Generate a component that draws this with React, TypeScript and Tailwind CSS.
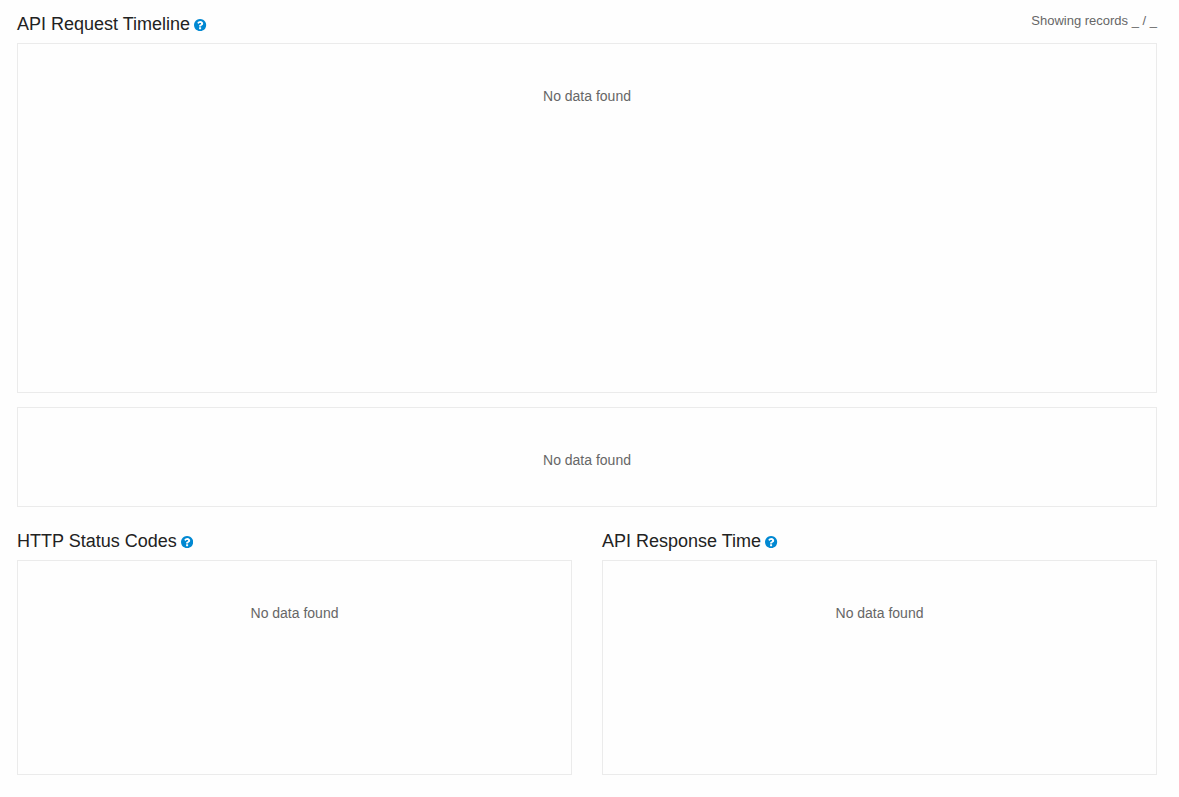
function QuestionIcon() {
  return (
    <svg viewBox="128 128 1536 1536" fill="currentColor" aria-hidden="true" className="mt-[2px] ml-[4.3px] size-[12.2px] shrink-0 text-[#0088d2]">
      <path d="M1024 1376v-192q0-14-9-23t-23-9h-192q-14 0-23 9t-9 23v192q0 14 9 23t23 9h192q14 0 23-9t9-23zm256-672q0-88-55.5-163t-138.5-116-170.5-41q-243 0-371 213-15 24 8 42l132 100q7 6 19 6 16 0 25-12 53-68 86-92 34-24 86-24 48 0 85.5 26t37.5 59q0 38-20 61t-68 45q-63 28-115.5 86.500t-52.5 125.500v36q0 14 9 23t23 9h192q14 0 23-9t9-23q0-19 21.500-49.500t54.500-49.500q32-18 49-28.500t46-35 44.500-48 28-60.500 12.500-81zm384 192q0 209-103 385.500t-279.500 279.500-385.500 103-385.500-103-279.500-279.500-103-385.500 103-385.500 279.500-279.500 385.500-103 385.500 103 279.500 279.500 103 385.500z" />
    </svg>
  );
}

function Heading({ children }: { children: string }) {
  return (
    <h2 className="flex h-5 items-center text-[18px] leading-5 text-[#222]">
      <span>{children}</span>
      <QuestionIcon />
    </h2>
  );
}

function Panel({ className }: { className: string }) {
  return (
    <div className={`border border-[#ebebeb] pt-[42px] text-center text-[14px] leading-5 text-[#666] ${className}`}>
      No data found
    </div>
  );
}

export default function App() {
  return (
    <main className="h-[797px] w-[1179px] overflow-hidden bg-[#fefefe] pt-[14px] pr-[22px] pl-[17px] font-['Liberation_Sans',Arial,sans-serif]">
      <header className="flex justify-between">
        <Heading>API Request Timeline</Heading>
        <p className="-mt-[3px] text-[13px] leading-5 text-[#666]">Showing records _ / _</p>
      </header>
      <Panel className="mt-[9px] h-[350px]" />
      <Panel className="mt-[14px] h-[100px]" />
      <div className="mt-[24px] grid grid-cols-2 gap-[30px]">
        <section>
          <Heading>HTTP Status Codes</Heading>
          <Panel className="mt-[9px] h-[215px]" />
        </section>
        <section>
          <Heading>API Response Time</Heading>
          <Panel className="mt-[9px] h-[215px]" />
        </section>
      </div>
    </main>
  );
}
